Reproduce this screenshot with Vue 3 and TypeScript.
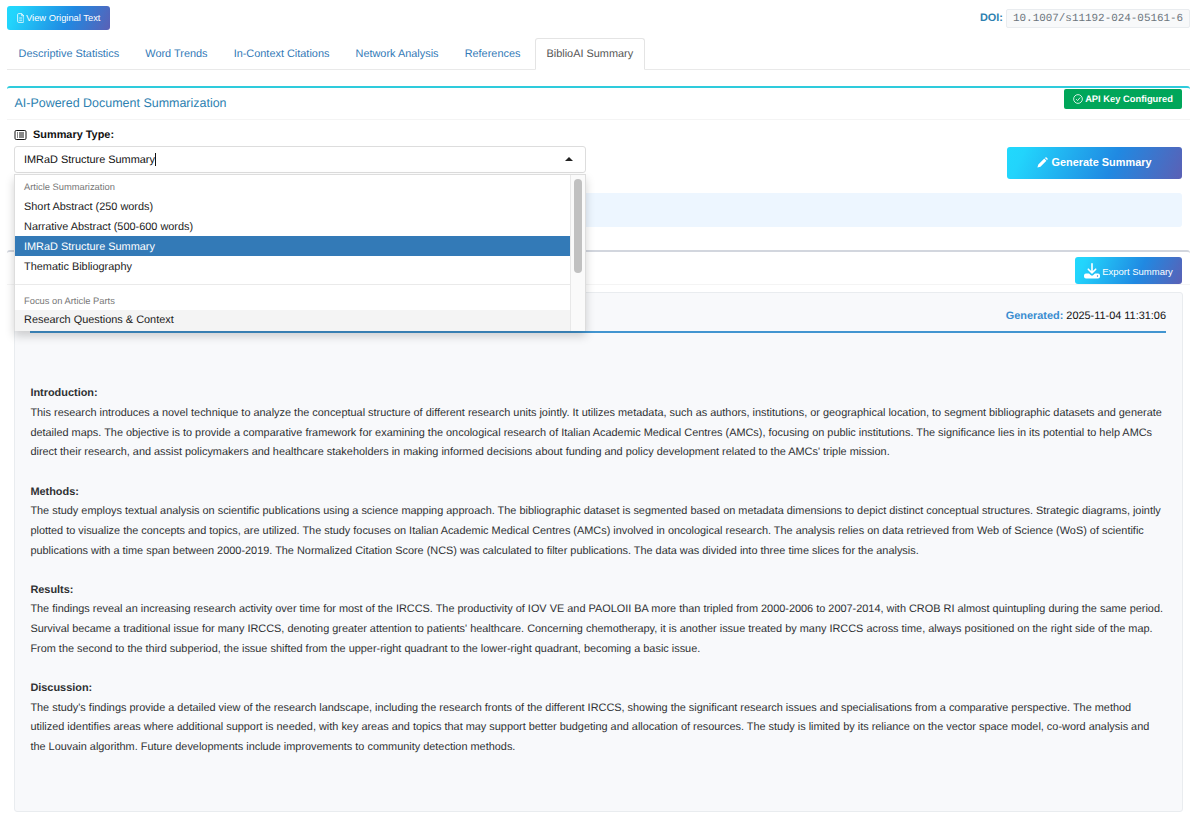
<script setup lang="ts">
import { ref } from 'vue'

interface Section {
  title: string
  lines: string[]
}

const tabs = [
  'Descriptive Statistics',
  'Word Trends',
  'In-Context Citations',
  'Network Analysis',
  'References',
  'BiblioAI Summary',
]
const activeTab = ref('BiblioAI Summary')

const groups = [
  {
    label: 'Article Summarization',
    options: [
      'Short Abstract (250 words)',
      'Narrative Abstract (500-600 words)',
      'IMRaD Structure Summary',
      'Thematic Bibliography',
    ],
  },
  { label: 'Focus on Article Parts', options: ['Research Questions & Context'] },
]
const selected = ref('IMRaD Structure Summary')
const hovered = ref('Research Questions & Context')

const sections: Section[] = [
  {
    title: 'Introduction:',
    lines: [
      'This research introduces a novel technique to analyze the conceptual structure of different research units jointly. It utilizes metadata, such as authors, institutions, or geographical location, to segment bibliographic datasets and generate',
      'detailed maps. The objective is to provide a comparative framework for examining the oncological research of Italian Academic Medical Centres (AMCs), focusing on public institutions. The significance lies in its potential to help AMCs',
      "direct their research, and assist policymakers and healthcare stakeholders in making informed decisions about funding and policy development related to the AMCs' triple mission.",
    ],
  },
  {
    title: 'Methods:',
    lines: [
      'The study employs textual analysis on scientific publications using a science mapping approach. The bibliographic dataset is segmented based on metadata dimensions to depict distinct conceptual structures. Strategic diagrams, jointly',
      'plotted to visualize the concepts and topics, are utilized. The study focuses on Italian Academic Medical Centres (AMCs) involved in oncological research. The analysis relies on data retrieved from Web of Science (WoS) of scientific',
      'publications with a time span between 2000-2019. The Normalized Citation Score (NCS) was calculated to filter publications. The data was divided into three time slices for the analysis.',
    ],
  },
  {
    title: 'Results:',
    lines: [
      'The findings reveal an increasing research activity over time for most of the IRCCS. The productivity of IOV VE and PAOLOII BA more than tripled from 2000-2006 to 2007-2014, with CROB RI almost quintupling during the same period.',
      "Survival became a traditional issue for many IRCCS, denoting greater attention to patients' healthcare. Concerning chemotherapy, it is another issue treated by many IRCCS across time, always positioned on the right side of the map.",
      'From the second to the third subperiod, the issue shifted from the upper-right quadrant to the lower-right quadrant, becoming a basic issue.',
    ],
  },
  {
    title: 'Discussion:',
    lines: [
      "The study's findings provide a detailed view of the research landscape, including the research fronts of the different IRCCS, showing the significant research issues and specialisations from a comparative perspective. The method",
      'utilized identifies areas where additional support is needed, with key areas and topics that may support better budgeting and allocation of resources. The study is limited by its reliance on the vector space model, co-word analysis and',
      'the Louvain algorithm. Future developments include improvements to community detection methods.',
    ],
  },
]
</script>

<template>
  <div class="page">
    <header class="top">
      <button class="btn btn-view">
        <svg class="ic-file" viewBox="0 0 12 16" fill="none" stroke="currentColor" stroke-width="1.3">
          <path d="M1 2.5Q1 1 2.5 1H7.5L11 4.5V13.5Q11 15 9.500 15H2.500Q1 15 1 13.500Z" />
          <path d="M7.500 1V4.500H11M3.500 8H8.500M3.500 11.500H8.500" />
        </svg>
        <span>View Original Text</span>
      </button>
      <div class="doi">
        <strong>DOI:</strong>
        <code>10.1007/s11192-024-05161-6</code>
      </div>
    </header>

    <nav class="tabs">
      <a v-for="t in tabs" :key="t" class="tab" :class="{ active: t === activeTab }" @click="activeTab = t">{{ t }}</a>
    </nav>

    <section class="box primary">
      <div class="box-head">
        <h3>AI-Powered Document Summarization</h3>
        <span class="badge">
          <svg class="ic-check" viewBox="0 0 16 16" fill="none" stroke="currentColor" stroke-width="1.3">
            <circle cx="8" cy="8" r="7" />
            <path d="M5 8.200L7.300 10.500L11.500 5.600" />
          </svg>
          <span>API Key Configured</span>
        </span>
      </div>
      <div class="box-body">
        <div class="controls">
          <div class="field">
            <label class="label">
              <svg class="ic-list" viewBox="0 0 24 20" fill="none" stroke="currentColor" stroke-width="2">
                <rect x="1" y="1" width="22" height="18" rx="2.500" />
                <path d="M9 6H19M9 10H19M9 14H19" />
                <path d="M5 6H7M5 10H7M5 14H7" />
              </svg>
              <span>Summary Type:</span>
            </label>
            <div class="select">
              <span class="value">{{ selected }}</span><i class="caret"></i>
              <i class="arrow"></i>
              <div class="menu">
                <div class="options">
                  <div v-for="g in groups" :key="g.label" class="group">
                    <div class="group-label">{{ g.label }}</div>
                    <div
                      v-for="o in g.options"
                      :key="o"
                      class="option"
                      :class="{ selected: o === selected, hovered: o === hovered }"
                    >{{ o }}</div>
                  </div>
                </div>
                <div class="track"><div class="thumb"></div></div>
              </div>
            </div>
          </div>
          <button class="btn btn-generate">
            <svg class="ic-pencil" viewBox="0 0 16 16" fill="currentColor">
              <path d="M10.600 2.300L13.700 5.400L5 14.100L0.600 15.400L1.900 11ZM11.500 1.400L12.300 0.600Q13.100 0 13.900 0.700L15.300 2.100Q16 2.900 15.400 3.700L14.600 4.500Z" />
            </svg>
            <span>Generate Summary</span>
          </button>
        </div>
        <div class="info"></div>
      </div>
    </section>

    <section class="box">
      <div class="box-head result-head">
        <button class="btn btn-export">
          <svg class="ic-download" viewBox="0 0 16 16">
            <path d="M8 0.800V9.500M4.300 6.200L8 9.900L11.700 6.200" fill="none" stroke="currentColor" stroke-width="1.600" stroke-linecap="round" stroke-linejoin="round" />
            <path d="M2 10.500H5L7 12.300Q8 13 9 12.300L11 10.500H14Q16 10.500 16 12.500V13.500Q16 15.500 14 15.500H2Q0 15.500 0 13.500V12.500Q0 10.500 2 10.500Z" fill="currentColor" />
            <circle cx="13.500" cy="13" r="0.700" fill="#2583d8" />
          </svg>
          <span>Export Summary</span>
        </button>
      </div>
      <div class="result">
        <div class="generated"><p><strong>Generated:</strong> 2025-11-04 11:31:06</p></div>
        <article>
          <div v-for="s in sections" :key="s.title" class="section">
            <h4>{{ s.title }}</h4>
            <p v-for="l in s.lines" :key="l">{{ l }}</p>
          </div>
        </article>
      </div>
    </section>
  </div>
</template>

<style>
html,
body {
  margin: 0;
  background: #fff;
  overflow: hidden;
}
</style>

<style scoped>
.page {
  box-sizing: border-box;
  width: 1200px;
  height: 832px;
  padding: 6px 10px 0 7px;
  font-family: 'Liberation Sans', Arial, sans-serif;
  font-size: 10.92px;
  color: #2f3133;
  background: #fff;
  text-rendering: geometricPrecision;
}
.page * {
  box-sizing: border-box;
}
svg {
  display: block;
  flex: none;
}
.top {
  display: flex;
  justify-content: space-between;
  height: 32px;
}
.btn {
  display: flex;
  align-items: center;
  justify-content: center;
  padding: 0;
  border: 0;
  border-radius: 3px;
  color: #fff;
  font-family: inherit;
  white-space: nowrap;
  background: linear-gradient(115deg, #21d9fd 0%, #22d4fc 10%, #2089e2 60%, #5b60b5 100%);
}
.btn-view {
  width: 103px;
  height: 24px;
  gap: 2px;
  font-size: 9.36px;
}
.ic-file {
  width: 7.500px;
  height: 10px;
}
.doi {
  display: flex;
  height: 24px;
  align-items: center;
  gap: 3px;
}
.doi strong {
  font-size: 10.92px;
  color: #2d7fb0;
}
.doi code {
  display: flex;
  align-items: center;
  width: 184px;
  height: 19px;
  padding: 1px 0 0 6px;
  border: 1px solid #e9ecef;
  border-radius: 2px;
  background: #f8f9fa;
  color: #6c757d;
  font-family: 'Liberation Mono', monospace;
  font-size: 10.92px;
}
.tabs {
  display: flex;
  height: 32px;
  border-bottom: 1px solid #e9e9e9;
}
.tab {
  height: 32px;
  padding: 0 11px;
  margin-right: 2.100px;
  border: 1px solid transparent;
  border-radius: 3px 3px 0 0;
  line-height: 31px;
  color: #337ab7;
  white-space: nowrap;
}
.tab:first-child {
  padding-left: 10.600px;
}
.tab.active {
  border-color: #e4e4e4;
  border-bottom-color: #fff;
  background: #fff;
  color: #555;
}
.box {
  border-top: 2px solid #d2d6de;
  border-radius: 3px;
}
.box.primary {
  margin-top: 16px;
  height: 164px;
  border-top-color: #2ecbdc;
}
.box-head {
  display: flex;
  height: 32px;
  padding: 0 8px 0 7.500px;
  justify-content: space-between;
  border-bottom: 1px solid #f4f4f4;
}
h3 {
  margin: 0;
  font-size: 12.48px;
  font-weight: 400;
  line-height: 31px;
  color: #2d7fb0;
}
.badge {
  display: flex;
  align-items: center;
  justify-content: center;
  gap: 2px;
  width: 118px;
  height: 20px;
  margin-top: 1px;
  border-radius: 2px;
  background: #00a65a;
  color: #fff;
  font-size: 9.36px;
  font-weight: 700;
  white-space: nowrap;
}
.ic-check {
  width: 10px;
  height: 10px;
}
.box-body {
  padding: 7px 8px 0 7px;
}
.controls {
  display: flex;
  justify-content: space-between;
}
.field {
  width: 572px;
}
.label {
  display: flex;
  align-items: center;
  gap: 6px;
  height: 16px;
  margin-bottom: 3px;
  font-weight: 700;
  color: #111;
}
.ic-list {
  width: 13px;
  height: 10px;
}
.select {
  position: relative;
  display: flex;
  align-items: center;
  height: 27px;
  padding: 0 12px 0 9px;
  border: 1px solid #ddd;
  border-radius: 3px;
  color: #111;
}
.caret {
  width: 1px;
  height: 13px;
  background: #111;
}
.arrow {
  margin: -2px 0 0 auto;
  border: 4px solid transparent;
  border-top: 0;
  border-bottom: 4px solid #222;
}
.menu {
  position: absolute;
  z-index: 5;
  top: 27px;
  left: -1px;
  display: flex;
  width: 572px;
  height: 157px;
  border: 1px solid #ddd;
  border-bottom: 0;
  background: #fff;
  box-shadow: 0 5px 9px rgba(0, 0, 0, 0.18);
}
.options {
  flex: 1;
  overflow: hidden;
}
.group + .group {
  margin-top: 7px;
  padding-top: 5px;
  border-top: 1px solid #eaeaea;
}
.group-label {
  height: 20.500px;
  padding-left: 9px;
  font-size: 9.36px;
  line-height: 24px;
  color: #777;
}
.group + .group .group-label {
  line-height: 23px;
}
.option {
  height: 20.280px;
  padding-left: 9px;
  line-height: 22px;
  color: #222;
}
.option.selected {
  background: #337ab7;
  color: #fff;
}
.option.hovered {
  height: 23px;
  line-height: 21px;
  background: #f4f4f4;
}
.track {
  width: 15px;
  padding: 4px 3px;
  border-left: 1px solid #e8e8e8;
  background: #fafafa;
}
.thumb {
  width: 8px;
  height: 94px;
  border-radius: 4px;
  background: #c1c1c1;
}
.btn-generate {
  width: 175px;
  height: 32px;
  margin-top: 20px;
  padding-bottom: 2px;
  gap: 3px;
  font-size: 10.920px;
  font-weight: 700;
}
.ic-pencil {
  width: 11px;
  height: 11px;
}
.info {
  height: 34px;
  margin-top: 14px;
  border-radius: 3px;
  background: #edf6ff;
}
.result-head {
  height: 33px;
  justify-content: flex-end;
}
.btn-export {
  width: 107px;
  height: 27px;
  margin-top: 5px;
  gap: 2px;
  font-size: 9.500px;
}
.btn-export span {
  padding-top: 2px;
}
.ic-download {
  width: 16px;
  height: 16px;
}
.result {
  height: 520px;
  margin: 7px 7px 0;
  padding: 0 16px 0 15.400px;
  border: 1px solid #e9ecef;
  border-radius: 3px;
  background: #f8f9fb;
}
.generated {
  display: flex;
  justify-content: flex-end;
  height: 40px;
  border-bottom: 2px solid #4295d0;
  color: #111;
  line-height: 46px;
}
.generated strong {
  color: #3a8dd0;
}
p,
h4 {
  margin: 0;
  white-space: pre;
}
article {
  padding-top: 51.300px;
  line-height: 19.650px;
}
.section {
  margin-bottom: 19.650px;
}
h4 {
  font-size: 10.92px;
}
</style>
